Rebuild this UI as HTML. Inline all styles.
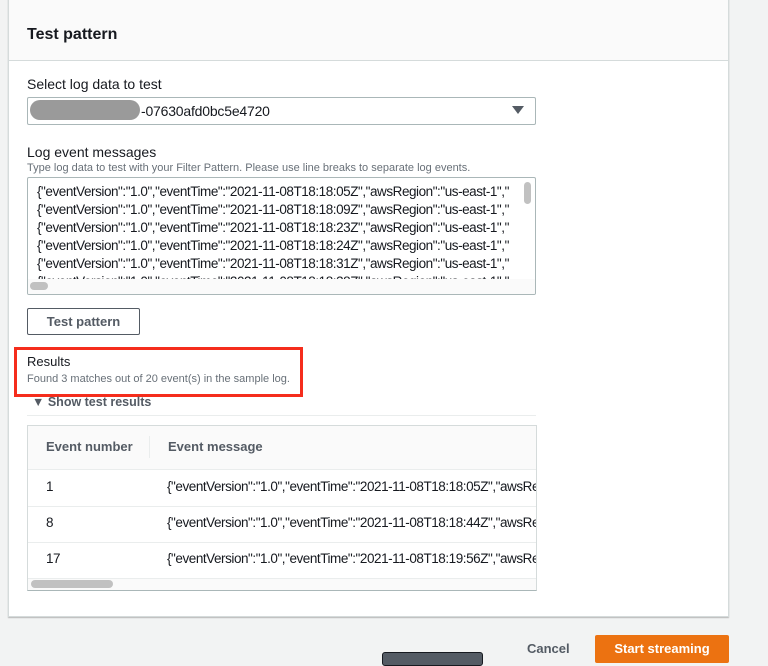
<!DOCTYPE html>
<html><head><meta charset="utf-8"><style>
*{box-sizing:border-box;margin:0;padding:0}
body{width:768px;height:662px;overflow:hidden;background:#f2f3f3;font-family:"Liberation Sans",Arial,sans-serif;color:#16191f;position:relative}
.a{position:absolute;white-space:nowrap}
.panel{position:absolute;left:8px;top:-2px;width:721px;height:619px;background:#fff;border:1px solid #d5dbdb;box-shadow:0 1px 1px rgba(0,0,0,.25)}
.hdr{position:absolute;left:8px;top:-2px;width:721px;height:63px;background:#fafafa;border:1px solid #d5dbdb;border-top:none}
.ta{font-size:13.5px;color:#16191f;line-height:18px;letter-spacing:-0.45px}
</style></head><body>
<div class="panel"></div>
<div class="hdr"></div>
<div class="a" style="left:27px;top:26px;font-size:16px;font-weight:bold">Test pattern</div>
<div class="a" style="left:27px;top:76px;font-size:14px">Select log data to test</div>
<div class="a" style="left:27px;top:97px;width:509px;height:28px;border:1px solid #aab7b8;border-radius:2px"></div>
<div class="a" style="left:30px;top:100px;width:110px;height:20px;background:#9a9a9a;border-radius:10px"></div>
<div class="a" style="left:141px;top:103px;font-size:14px;letter-spacing:-0.2px">-07630afd0bc5e4720</div>
<svg class="a" style="left:512px;top:106px" width="12" height="9"><path d="M0 0H12L6 8Z" fill="#545b64"/></svg>
<div class="a" style="left:27px;top:144px;font-size:14px">Log event messages</div>
<div class="a" style="left:27px;top:162px;font-size:11px;color:#687078">Type log data to test with your Filter Pattern. Please use line breaks to separate log events.</div>
<div class="a" style="left:27px;top:177px;width:509px;height:118px;border:1px solid #aab7b8;border-radius:2px;overflow:hidden">
<div class="a ta" style="left:9px;top:5px;width:485px;overflow:hidden">{"eventVersion":"1.0","eventTime":"2021-11-08T18:18:05Z","awsRegion":"us-east-1","<br>{"eventVersion":"1.0","eventTime":"2021-11-08T18:18:09Z","awsRegion":"us-east-1","<br>{"eventVersion":"1.0","eventTime":"2021-11-08T18:18:23Z","awsRegion":"us-east-1","<br>{"eventVersion":"1.0","eventTime":"2021-11-08T18:18:24Z","awsRegion":"us-east-1","<br>{"eventVersion":"1.0","eventTime":"2021-11-08T18:18:31Z","awsRegion":"us-east-1","<br>{"eventVersion":"1.0","eventTime":"2021-11-08T18:18:38Z","awsRegion":"us-east-1","</div>
<div class="a" style="left:0;top:101px;width:507px;height:16px;background:#fafafa"></div>
<div class="a" style="left:2px;top:104px;width:18px;height:8px;border-radius:4px;background:#c1c1c1"></div>
<div class="a" style="left:496px;top:4px;width:7px;height:22px;border-radius:4px;background:#c1c1c1"></div>
</div>
<div class="a" style="left:27px;top:308px;width:113px;height:27px;border:1px solid #545b64;border-radius:2px;font-size:13px;font-weight:bold;color:#545b64;text-align:center;line-height:25px">Test pattern</div>
<div class="a" style="left:14px;top:347px;width:289px;height:50px;border:3px solid #f52d1c"></div>
<div class="a" style="left:27px;top:354px;font-size:13px">Results</div>
<div class="a" style="left:27px;top:373px;font-size:11px;color:#687078">Found 3 matches out of 20 event(s) in the sample log.</div>
<div class="a" style="left:32px;top:395px;font-size:12.5px;font-weight:bold;color:#545b64">▼ Show test results</div>
<div class="a" style="left:27px;top:415px;width:509px;height:1px;background:#eaeded"></div>
<div class="a" style="left:27px;top:425px;width:510px;height:166px;border:1px solid #d5dbdb;border-bottom:1px solid #aab7b8;overflow:hidden">
<div class="a" style="left:0;top:0;width:510px;height:44px;background:#fafafa;border-bottom:1px solid #eaeded"></div>
<div class="a" style="left:121px;top:10px;width:1px;height:22px;background:#eaeded"></div>
<div class="a" style="left:18px;top:13px;font-size:13px;font-weight:bold;color:#545b64">Event number</div>
<div class="a" style="left:140px;top:13px;font-size:13px;font-weight:bold;color:#545b64">Event message</div>
<div class="a" style="left:0;top:80px;width:510px;height:1px;background:#eaeded"></div>
<div class="a" style="left:0;top:116px;width:510px;height:1px;background:#eaeded"></div>
<div class="a" style="left:0;top:152px;width:510px;height:14px;background:#fafafa;border-top:1px solid #eaeded"></div>
<div class="a" style="left:3px;top:154px;width:82px;height:8px;border-radius:4px;background:#c1c1c1"></div>
<div class="a ta" style="left:18px;top:52px">1</div>
<div class="a ta" style="left:18px;top:88px">8</div>
<div class="a ta" style="left:18px;top:124px">17</div>
<div class="a ta" style="left:139px;top:52px">{"eventVersion":"1.0","eventTime":"2021-11-08T18:18:05Z","awsRegion"</div>
<div class="a ta" style="left:139px;top:88px">{"eventVersion":"1.0","eventTime":"2021-11-08T18:18:44Z","awsRegion"</div>
<div class="a ta" style="left:139px;top:124px">{"eventVersion":"1.0","eventTime":"2021-11-08T18:19:56Z","awsRegion"</div>
</div>
<div class="a" style="left:382px;top:652px;width:101px;height:14px;background:#545b64;border:1px solid #16191f;border-radius:3px"></div>
<div class="a" style="left:527px;top:641px;font-size:13px;font-weight:bold;color:#545b64">Cancel</div>
<div class="a" style="left:595px;top:635px;width:134px;height:28px;background:#ec7211;border-radius:2px;color:#fff;font-size:13px;font-weight:bold;text-align:center;line-height:27px">Start streaming</div>
</body></html>
